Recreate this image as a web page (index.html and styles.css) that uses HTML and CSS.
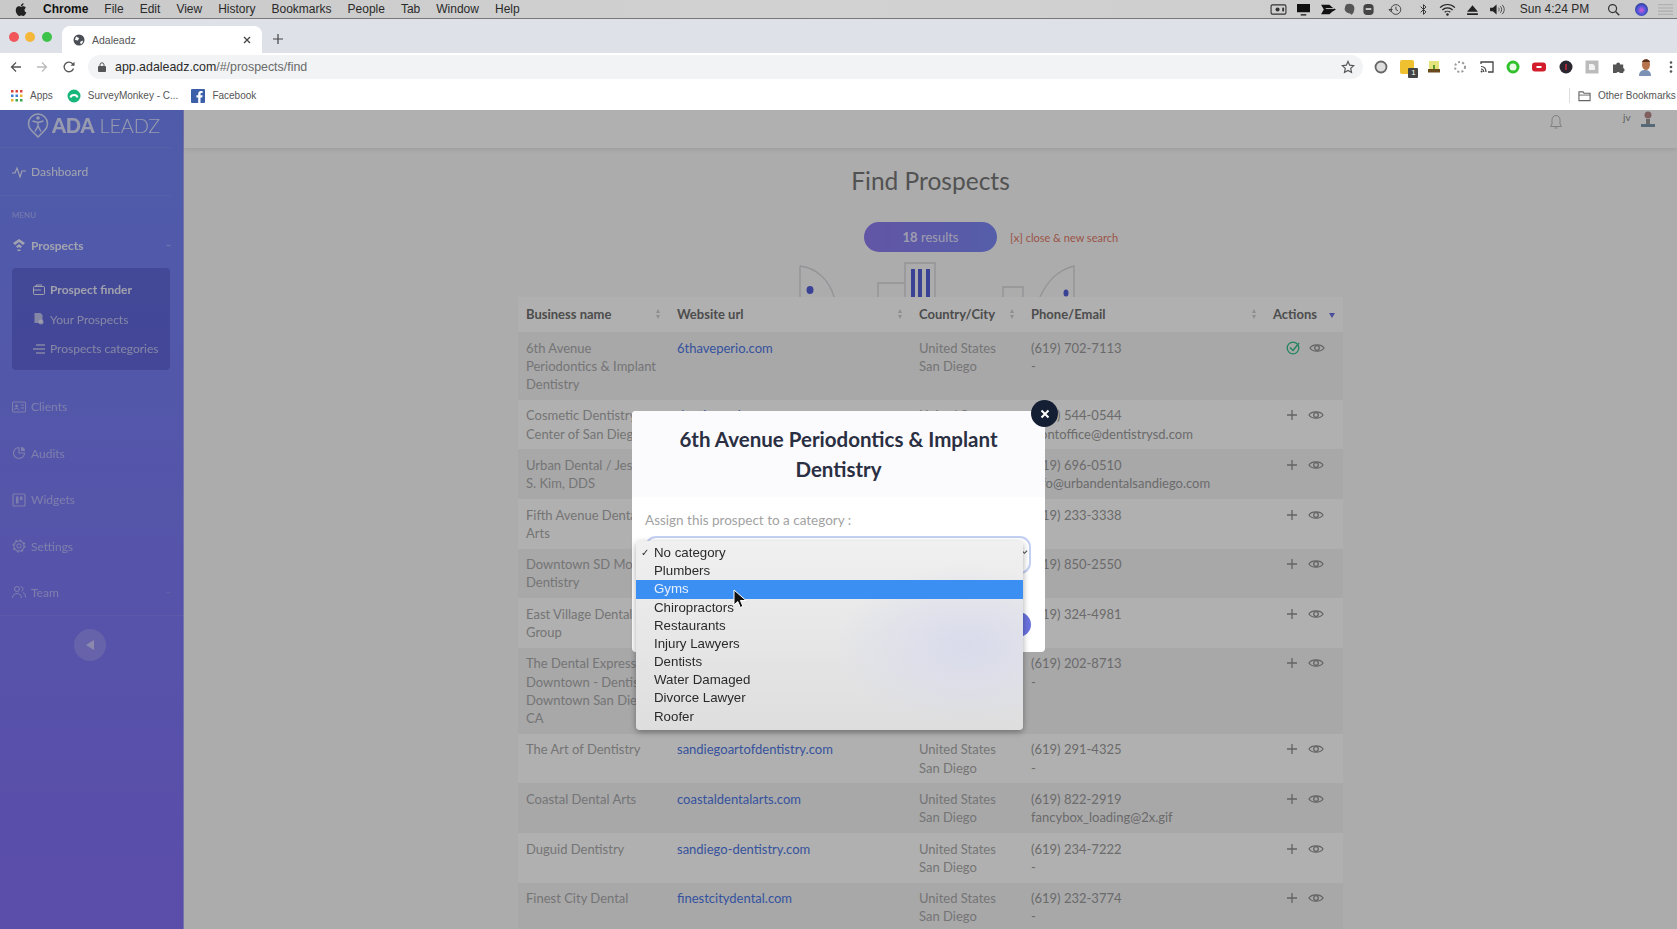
FILE: index.html
```html
<!DOCTYPE html>
<html lang="en">
<head>
<meta charset="utf-8">
<title>Adaleadz</title>
<link rel="stylesheet" href="styles.css">
</head>
<body>
<svg class="defs" aria-hidden="true">
  <symbol id="eye" viewBox="0 0 16 12"><path d="M1 6C3.500 1.800 12.500 1.800 15 6 12.500 10.200 3.500 10.200 1 6Z" fill="none" stroke="currentColor" stroke-width="1.300"/><circle cx="8" cy="6" r="2.300" fill="none" stroke="currentColor" stroke-width="1.300"/></symbol>
  <symbol id="plus" viewBox="0 0 12 12"><path d="M6 1v10M1 6h10" fill="none" stroke="currentColor" stroke-width="1.300"/></symbol>
  <symbol id="sort" viewBox="0 0 6 12"><path d="M3 1 5 5H1ZM3 11 1 7h4Z" fill="currentColor"/></symbol>
</svg>
<div class="screen">
  <div class="menubar">
    <svg class="apple" viewBox="0 0 15 16"><path d="M11.200 8.600c0-1.700 1.400-2.500 1.500-2.600-.8-1.200-2.100-1.300-2.500-1.400-1.100-.1-2.100.6-2.600.6s-1.400-.6-2.300-.6C4.100 4.600 3 5.300 2.400 6.300c-1.200 2.100-.3 5.200.9 6.900.6.800 1.300 1.800 2.200 1.700.9 0 1.200-.6 2.300-.6s1.400.6 2.300.6c1 0 1.600-.8 2.100-1.700.7-1 1-1.900 1-2-.1 0-1.900-.7-2-2.600zM9.500 3.500c.5-.6.800-1.400.7-2.300-.7 0-1.600.5-2.100 1.100-.5.500-.9 1.300-.8 2.200.8.100 1.600-.4 2.200-1z" fill="#222"/></svg>
    <nav class="menus">
      <b>Chrome</b><span>File</span><span>Edit</span><span>View</span><span>History</span><span>Bookmarks</span><span>People</span><span>Tab</span><span>Window</span><span>Help</span>
    </nav>
    <div class="tray">
      <svg viewBox="0 0 18 14"><rect x="1" y="2" width="16" height="10" rx="1.500" fill="none" stroke="#333" stroke-width="1.200"/><circle cx="8" cy="7" r="2.200" fill="#333"/><path d="M14 5v4" stroke="#333" stroke-width="2"/></svg>
      <svg viewBox="0 0 18 14"><path d="M2 1h14v9H2ZM6 12h6v1.500H6Z" fill="#111"/></svg>
      <svg viewBox="0 0 18 14"><path d="M1 2h9l3 2.500 4 2.500-4 2.500-3 2.500H1l3-5Z" fill="#111"/><path d="M6 6h9" stroke="#ccc"/></svg>
      <svg viewBox="0 0 14 14"><path d="M3 2c3-2 8-1.500 9 2 .8 3-.5 7-2.500 8.500C8.500 13 8 11 7 11 4 11 1 8 2 5Z" fill="#555"/></svg>
      <svg viewBox="0 0 14 14"><rect x="1.500" y="1" width="11" height="12" rx="4" fill="#444"/><rect x="4" y="5.500" width="6" height="2" fill="#ccc"/></svg>
      <svg viewBox="0 0 16 16"><circle cx="8.500" cy="8" r="6" fill="none" stroke="#444" stroke-width="1.200"/><path d="M8.500 4.500V8l2.500 1.500M0 8h4L2 10.500Z" fill="none" stroke="#444" stroke-width="1.200"/></svg>
      <svg viewBox="0 0 10 16"><path d="M1.500 4.500 8 11 5 14V2l3 3-6.500 6.500" fill="none" stroke="#333" stroke-width="1.200"/></svg>
      <svg viewBox="0 0 18 14"><path d="M1 5c4.500-4.500 11.500-4.500 16 0M3.500 7.500c3-3 8-3 11 0M6 10c1.600-1.500 4.400-1.500 6 0" fill="none" stroke="#222" stroke-width="1.300"/><circle cx="9" cy="12.300" r="1.300" fill="#222"/></svg>
      <svg viewBox="0 0 12 12"><path d="M6 2 11 8H1ZM1 9.500h10V11H1Z" fill="#222"/></svg>
      <svg viewBox="0 0 18 14"><path d="M1 5h3l4-3.500v11L4 9H1Z" fill="#222"/><path d="M10 5c1 1 1 3 0 4M12 3.500c2 2 2 5 0 7M14 2c3 3 3 7 0 10" fill="none" stroke="#444"/></svg>
      <span class="clock">Sun 4:24 PM</span>
      <svg viewBox="0 0 14 14"><circle cx="6" cy="6" r="4.300" fill="none" stroke="#333" stroke-width="1.300"/><path d="m9.200 9.200 4 4" stroke="#333" stroke-width="1.500"/></svg>
      <span class="siri"></span>
      <svg viewBox="0 0 16 12"><path d="M1 1.500h14M1 4.500h14M1 7.500h14M1 10.500h14" stroke="#aaa"/></svg>
    </div>
  </div>

  <div class="tabstrip">
    <div class="lights"><i class="red"></i><i class="amber"></i><i class="green"></i></div>
    <div class="tab">
      <svg class="favicon" viewBox="0 0 12 12"><circle cx="6" cy="6" r="5.500" fill="#4a4f55"/><path d="M3 2.500 6 4 5 6.500 2 6ZM7 8l2.500-1.500L10 8 8 10.500Z" fill="#fff"/></svg>
      <span class="tab-title">Adaleadz</span>
      <svg class="tab-close" viewBox="0 0 8 8"><path d="m1 1 6 6M7 1 1 7" stroke="#444" stroke-width="1.300"/></svg>
    </div>
    <svg class="new-tab" viewBox="0 0 10 10"><path d="M5 0v10M0 5h10" stroke="#444" stroke-width="1.200"/></svg>
  </div>

  <div class="toolbar">
    <svg class="nav nav-back" viewBox="0 0 12 12"><path d="M11 6H2M6 1.500 1.500 6 6 10.500" fill="none" stroke="#555" stroke-width="1.300"/></svg>
    <svg class="nav nav-fwd" viewBox="0 0 12 12"><path d="M1 6h9M6 1.500 10.500 6 6 10.500" fill="none" stroke="#bbb" stroke-width="1.300"/></svg>
    <svg class="nav nav-reload" viewBox="0 0 12 12"><path d="M10.500 7.500A4.800 4.800 0 1 1 9.500 2.700L11 4" fill="none" stroke="#555" stroke-width="1.300"/><path d="M11.500.8v4h-4Z" fill="#555"/></svg>
    <div class="omnibox">
      <svg class="lock" viewBox="0 0 8 10"><rect y="4" width="8" height="6" rx="1" fill="#555"/><path d="M2 4V2.800a2 2 0 0 1 4 0V4" fill="none" stroke="#555"/></svg>
      <span class="url">app.adaleadz.com<span class="url-path">/#/prospects/find</span></span>
      <svg class="star" viewBox="0 0 14 14"><path d="m7 1.500 1.700 3.700 4 .5-3 2.700.8 4L7 10.400l-3.500 2 .8-4-3-2.700 4-.5Z" fill="none" stroke="#555" stroke-width="1.200"/></svg>
    </div>
    <div class="extensions">
      <svg viewBox="0 0 14 14"><circle cx="7" cy="7" r="5.500" fill="#ddd" stroke="#666" stroke-width="1.800"/></svg>
      <span class="ext-yellow"><span class="ext-badge">1</span></span>
      <svg viewBox="0 0 14 14"><path d="M2 1h10v8H2Z" fill="#e4e37c"/><path d="M1 9h12v3.500H1Z" fill="#6a4a1c"/><path d="M6 5h2v4H6Z" fill="#5a9a30"/></svg>
      <svg viewBox="0 0 14 14"><circle cx="7" cy="7" r="5" fill="none" stroke="#999" stroke-width="2" stroke-dasharray="2 2.200"/></svg>
      <svg viewBox="0 0 14 14"><path d="M1 4V2h12v10H8" fill="none" stroke="#444" stroke-width="1.300"/><path d="M1 6.500c3 0 5 2 5 5.500M1 9c1.500 0 2.800 1.200 2.800 3" fill="none" stroke="#444" stroke-width="1.200"/><circle cx="1.600" cy="11.600" r="1" fill="#444"/></svg>
      <svg viewBox="0 0 14 14"><circle cx="7" cy="7" r="5" fill="#eafbe6" stroke="#31c22e" stroke-width="3"/></svg>
      <svg viewBox="0 0 14 14"><rect y="2.500" width="14" height="9" rx="3" fill="#d31c2c"/><rect x="4.500" y="6" width="5" height="2" fill="#fff"/></svg>
      <svg viewBox="0 0 14 14"><circle cx="7" cy="7" r="6.500" fill="#2c2630"/><path d="M6 4h2v6H6Z" fill="#a02a3a"/></svg>
      <svg viewBox="0 0 14 14"><rect x=".5" y=".5" width="13" height="13" fill="#bbb"/><path d="M4 4h4l2 2v4H4Z" fill="#f2f2f2"/></svg>
      <svg viewBox="0 0 14 14"><path d="M1 4.500h3.200a2 2 0 0 1 4 0h3V8a2 2 0 0 1 0 3.800V13h-3.300a2 2 0 0 0-3.500 0H1Z" fill="#555"/></svg>
      <svg viewBox="0 0 18 18"><path d="M3 18c0-5 3-6 6-6s6 1 6 6Z" fill="#7d93b5"/><ellipse cx="10" cy="6.500" rx="4" ry="5.500" fill="#b7744c"/><path d="M6 4c1-3.500 7-4 8 0Z" fill="#5a3420"/></svg>
      <svg class="ext-dots" viewBox="0 0 4 14"><circle cx="2" cy="2.500" r="1.300" fill="#555"/><circle cx="2" cy="7" r="1.300" fill="#555"/><circle cx="2" cy="11.500" r="1.300" fill="#555"/></svg>
    </div>
  </div>

  <div class="bookmarks">
    <span class="bm bm-apps">
      <svg viewBox="0 0 12 12"><g fill="#d9453a"><rect width="2.500" height="2.500"/><rect x="4.500" width="2.500" height="2.500"/><rect x="9" width="2.500" height="2.500"/></g><g fill="#3e7fd8"><rect y="4.500" width="2.500" height="2.500"/><rect x="4.500" y="4.500" width="2.500" height="2.500"/></g><g fill="#e9b52f"><rect x="9" y="4.500" width="2.500" height="2.500"/><rect y="9" width="2.500" height="2.500"/></g><g fill="#3da653"><rect x="4.500" y="9" width="2.500" height="2.500"/><rect x="9" y="9" width="2.500" height="2.500"/></g></svg>
      Apps
    </span>
    <span class="bm bm-survey">
      <svg viewBox="0 0 14 14"><circle cx="7" cy="7" r="6.500" fill="#16b67a"/><path d="M3.500 8.500C4 5 10 5 10.500 8.500" fill="none" stroke="#fff" stroke-width="2"/></svg>
      SurveyMonkey - C...
    </span>
    <span class="bm bm-fb">
      <svg viewBox="0 0 14 14"><rect width="14" height="14" rx="1" fill="#3b5fa8"/><path d="M9.500 14V8.500h1.800l.3-2.200H9.500V5c0-.7.3-1.100 1.100-1.100h1V2c-.5 0-1-.1-1.600-.1C8.300 1.900 7.200 3 7.200 4.800v1.500H5.400v2.200h1.800V14Z" fill="#fff"/></svg>
      Facebook
    </span>
    <span class="bm bm-other">
      <svg viewBox="0 0 14 12"><path d="M1 1.500h4.500l1 1.500H13v8H1Z" fill="none" stroke="#666" stroke-width="1.200"/><path d="M1 5h12" stroke="#666"/></svg>
      Other Bookmarks
    </span>
  </div>

  <div class="app">
    <aside class="sidebar">
      <div class="logo">
        <svg class="logo-mark" viewBox="0 0 22 26"><path d="M11 25 4.500 18.500A9.500 9.500 0 1 1 17.500 18.500Z" fill="none" stroke="currentColor" stroke-width="1.500"/><circle cx="11" cy="6" r="1.800" fill="currentColor"/><path d="M5.500 9 11 10.500 16.500 9M11 10.500V14l-3 5.500M11 14l3 5.500" fill="none" stroke="currentColor" stroke-width="1.500"/></svg>
        <span class="logo-text"><b>ADA</b> LEADZ</span>
      </div>
      <div class="side-item side-dash">
        <svg viewBox="0 0 14 14"><path d="M0 8h3l2-5 3 9 2-6h4" fill="none" stroke="currentColor" stroke-width="1.100"/></svg>
        <span>Dashboard</span>
      </div>
      <div class="side-label">MENU</div>
      <div class="side-item side-open">
        <svg viewBox="0 0 14 14"><path d="M7 1 1 5l2 2 4-3 4 3 2-2ZM7 6 4 8.500 5.500 10 7 9l1.500 1L10 8.500ZM5.500 11.500h3V13h-3Z" fill="currentColor"/></svg>
        <span>Prospects</span><i class="caret">‹</i>
      </div>
      <div class="subnav">
        <div class="sub-item sub-active"><svg viewBox="0 0 12 12"><rect x=".5" y="2.500" width="11" height="8" rx="1" fill="none" stroke="currentColor"/><path d="M3 2.500V1h6M.5 6H8" fill="none" stroke="currentColor"/></svg><span>Prospect finder</span></div>
        <div class="sub-item"><svg viewBox="0 0 12 12"><path d="M1.500 0h6l2 2v8h-8Z" fill="currentColor"/><circle cx="8" cy="9" r="2.500" fill="currentColor"/></svg><span>Your Prospects</span></div>
        <div class="sub-item"><svg viewBox="0 0 12 12"><path d="M3 2h9M0 6h12M3 10h9" fill="none" stroke="currentColor" stroke-width="1.300"/></svg><span>Prospects categories</span></div>
      </div>
      <div class="side-item side-dim side-first">
        <svg viewBox="0 0 14 14"><rect x=".5" y="2" width="13" height="10" rx="1" fill="none" stroke="currentColor"/><circle cx="4.500" cy="6" r="1.500" fill="currentColor"/><path d="M2 10c.5-2 4.500-2 5 0M9 5h3M9 8h3" fill="none" stroke="currentColor"/></svg>
        <span>Clients</span>
      </div>
      <div class="side-item side-dim">
        <svg viewBox="0 0 14 14"><path d="M7 1.500A5.500 5.500 0 1 0 12.500 7H7Z" fill="none" stroke="currentColor" stroke-width="1.200"/><path d="M9 1a4 4 0 0 1 4 4H9Z" fill="currentColor"/></svg>
        <span>Audits</span>
      </div>
      <div class="side-item side-dim">
        <svg viewBox="0 0 14 14"><rect x="1" y="1" width="12" height="12" rx="1" fill="none" stroke="currentColor" stroke-width="1.200"/><path d="M4 3.500h2.500v7H4ZM8 3.500h2.500v3.500H8Z" fill="currentColor"/></svg>
        <span>Widgets</span>
      </div>
      <div class="side-item side-dim">
        <svg viewBox="0 0 14 14"><circle cx="7" cy="7" r="2.200" fill="none" stroke="currentColor"/><circle cx="7" cy="7" r="5" fill="none" stroke="currentColor" stroke-width="1.100"/><circle cx="7" cy="7" r="6" fill="none" stroke="currentColor" stroke-width="1.200" stroke-dasharray="2 2.700"/></svg>
        <span>Settings</span>
      </div>
      <div class="side-item side-dim side-last">
        <svg viewBox="0 0 14 14"><circle cx="5" cy="4" r="2.500" fill="none" stroke="currentColor"/><path d="M.5 13c0-6 9-6 9 0M8.500 1.800c2.500-.5 3.500 3.500 1 4.500M11 7.500c1.500.5 2.500 2.500 2.500 5" fill="none" stroke="currentColor"/></svg>
        <span>Team</span><i class="caret">‹</i>
      </div>
      <div class="collapse"><svg viewBox="0 0 8 10"><path d="M8 0v10L0 5Z" fill="currentColor"/></svg></div>
    </aside>

    <main class="main">
      <header class="topbar">
        <svg class="bell" viewBox="0 0 14 16"><path d="M7 1.500c-3 0-4 2.500-4 5V10l-1.500 2.500h11L11 10V6.500c0-2.500-1-5-4-5ZM5.500 14h3" fill="none" stroke="currentColor"/></svg>
        <span class="user-initials">jv</span>
        <svg class="user-pic" viewBox="0 0 16 18"><circle cx="8" cy="5" r="3.500" fill="#b98a8a"/><path d="M1 14h14v3H1Z" fill="#7f97ad"/><path d="M6 9h4v5H6Z" fill="#999"/></svg>
      </header>
      <section class="content">
        <h1 class="page-title">Find Prospects</h1>
        <div class="results">
          <span></span>
          <span class="pill"><b>18</b> results</span>
          <span class="close-search"><span class="bracket">[x]</span> close &amp; new search</span>
        </div>
        <svg class="art" viewBox="0 0 825 35">
          <g fill="none" stroke="#d5d5d8" stroke-width="1.300">
            <path d="M282 4C300 6 312 20 316 35M282 4V35"/>
            <path d="M360 35V21H387M387 35V1H417V35"/>
            <path d="M485 35V25H505V35"/>
            <path d="M522 35C530 18 540 8 556 4V35"/>
          </g>
          <g fill="#5560d8">
            <ellipse cx="292" cy="28" rx="3.500" ry="4"/>
            <rect x="393" y="7" width="4" height="28"/><rect x="400" y="7" width="4" height="28"/><rect x="408" y="7" width="4" height="28"/>
            <ellipse cx="548" cy="31" rx="2.500" ry="3.500"/>
          </g>
        </svg>
        <table class="grid">
          <colgroup><col class="c1"><col class="c2"><col class="c3"><col class="c4"><col class="c5"></colgroup>
          <thead>
            <tr>
              <th><div class="th-in">Business name<svg class="sort"><use href="#sort"/></svg></div></th>
              <th><div class="th-in">Website url<svg class="sort"><use href="#sort"/></svg></div></th>
              <th><div class="th-in">Country/City<svg class="sort"><use href="#sort"/></svg></div></th>
              <th><div class="th-in">Phone/Email<svg class="sort"><use href="#sort"/></svg></div></th>
              <th><div class="th-in">Actions<i class="th-arrow"></i></div></th>
            </tr>
          </thead>
          <tbody>
            <tr><td>6th Avenue<br>Periodontics &amp; Implant<br>Dentistry</td><td><a>6thaveperio.com</a></td><td>United States<br>San Diego</td><td class="ph">(619) 702-7113<br>-</td><td><div class="acts"><svg class="ic-check" viewBox="0 0 14 14"><circle cx="7" cy="7" r="5.800" fill="none" stroke="currentColor" stroke-width="1.300"/><path d="m4 6.500 3 3L13 2" fill="none" stroke="currentColor" stroke-width="1.500"/></svg><svg class="ic-eye"><use href="#eye"/></svg></div></td></tr>
            <tr><td>Cosmetic Dentistry<br>Center of San Diego</td><td><a>dentistrysd.com</a></td><td>United States<br>San Diego</td><td class="ph">(619) 544-0544<br>frontoffice@dentistrysd.com</td><td><div class="acts"><svg class="ic-plus"><use href="#plus"/></svg><svg class="ic-eye"><use href="#eye"/></svg></div></td></tr>
            <tr><td>Urban Dental / Jessica<br>S. Kim, DDS</td><td><a>urbandentalsandiego.com</a></td><td>United States<br>San Diego</td><td class="ph">(619) 696-0510<br>info@urbandentalsandiego.com</td><td><div class="acts"><svg class="ic-plus"><use href="#plus"/></svg><svg class="ic-eye"><use href="#eye"/></svg></div></td></tr>
            <tr><td>Fifth Avenue Dental<br>Arts</td><td><a>fifthavedental.com</a></td><td>United States<br>San Diego</td><td class="ph">(619) 233-3338<br>-</td><td><div class="acts"><svg class="ic-plus"><use href="#plus"/></svg><svg class="ic-eye"><use href="#eye"/></svg></div></td></tr>
            <tr><td>Downtown SD Modern<br>Dentistry</td><td><a>downtownsd.com</a></td><td>United States<br>San Diego</td><td class="ph">(619) 850-2550<br>-</td><td><div class="acts"><svg class="ic-plus"><use href="#plus"/></svg><svg class="ic-eye"><use href="#eye"/></svg></div></td></tr>
            <tr><td>East Village Dental<br>Group</td><td><a>eastvillagedental.com</a></td><td>United States<br>San Diego</td><td class="ph">(619) 324-4981<br>-</td><td><div class="acts"><svg class="ic-plus"><use href="#plus"/></svg><svg class="ic-eye"><use href="#eye"/></svg></div></td></tr>
            <tr><td>The Dental Express<br>Downtown - Dentist<br>Downtown San Diego,<br>CA</td><td><a>thedentalexpress.com</a></td><td>United States<br>San Diego</td><td class="ph">(619) 202-8713<br>-</td><td><div class="acts"><svg class="ic-plus"><use href="#plus"/></svg><svg class="ic-eye"><use href="#eye"/></svg></div></td></tr>
            <tr><td>The Art of Dentistry</td><td><a>sandiegoartofdentistry.com</a></td><td>United States<br>San Diego</td><td class="ph">(619) 291-4325<br>-</td><td><div class="acts"><svg class="ic-plus"><use href="#plus"/></svg><svg class="ic-eye"><use href="#eye"/></svg></div></td></tr>
            <tr><td>Coastal Dental Arts</td><td><a>coastaldentalarts.com</a></td><td>United States<br>San Diego</td><td class="ph">(619) 822-2919<br>fancybox_loading@2x.gif</td><td><div class="acts"><svg class="ic-plus"><use href="#plus"/></svg><svg class="ic-eye"><use href="#eye"/></svg></div></td></tr>
            <tr><td>Duguid Dentistry</td><td><a>sandiego-dentistry.com</a></td><td>United States<br>San Diego</td><td class="ph">(619) 234-7222<br>-</td><td><div class="acts"><svg class="ic-plus"><use href="#plus"/></svg><svg class="ic-eye"><use href="#eye"/></svg></div></td></tr>
            <tr><td>Finest City Dental</td><td><a>finestcitydental.com</a></td><td>United States<br>San Diego</td><td class="ph">(619) 232-3774<br>-</td><td><div class="acts"><svg class="ic-plus"><use href="#plus"/></svg><svg class="ic-eye"><use href="#eye"/></svg></div></td></tr>
          </tbody>
        </table>
      </section>
    </main>

    <div class="backdrop"></div>

    <div class="modal">
      <span class="modal-close"><svg viewBox="0 0 10 10"><path d="m1.500 1.500 7 7M8.500 1.500l-7 7" stroke="#fff" stroke-width="2"/></svg></span>
      <div class="modal-head">6th Avenue Periodontics &amp; Implant Dentistry</div>
      <div class="modal-body">
        <div class="modal-label">Assign this prospect to a category :</div>
        <div class="select">No category<svg class="chev" viewBox="0 0 8 6"><path d="m1 1.500 3 3 3-3" fill="none" stroke="#555" stroke-width="1.300"/></svg></div>
        <div class="modal-actions"><span class="modal-btn">Save</span></div>
      </div>
    </div>

    <ul class="popup">
      <li class="opt-checked">No category</li>
      <li>Plumbers</li>
      <li class="opt-active">Gyms</li>
      <li>Chiropractors</li>
      <li>Restaurants</li>
      <li>Injury Lawyers</li>
      <li>Dentists</li>
      <li>Water Damaged</li>
      <li>Divorce Lawyer</li>
      <li>Roofer</li>
    </ul>

    <svg class="cursor" viewBox="0 0 14 20"><path d="M1 1v15l3.800-3.500 2.500 6 2.600-1.200-2.500-5.800H13Z" fill="#111" stroke="#fff" stroke-width="1"/></svg>
  </div>
</div>
</body>
</html>
```

FILE: styles.css
```css
* { box-sizing: border-box; }
html, body { margin: 0; height: 100%; }
body { overflow: hidden; background: #fff; font-family: "Liberation Sans", Arial, sans-serif; color: #333; }
.defs { display: none; }
.screen { width: 1677px; height: 929px; overflow: hidden; display: flex; flex-direction: column; filter: blur(.45px); }

/* mac menu bar */
.menubar { height: 19px; flex: none; display: flex; align-items: center; padding-left: 14px; background: linear-gradient(90deg, #c9c9c9, #d2d2d2 50%, #cbcbcb); border-bottom: 1px solid #77787a; font-size: 12px; color: #2a2a2a; }
.apple { width: 14px; height: 15px; margin-right: 15px; flex: none; }
.menus { display: flex; gap: 16px; }
.menus b { font-weight: 700; color: #111; }
.tray { margin-left: auto; padding-right: 2.500px; display: grid; grid-template-columns: 25px 25px 25px 17px 21px 33px 23px 25px 25px 25px 90px 27px 29px 19px; justify-items: center; align-items: center; height: 18px; }
.tray svg { width: 100%; max-width: 17px; height: 13px; }
.clock { white-space: nowrap; }
.siri { width: 13px; height: 13px; border-radius: 50%; background: radial-gradient(circle at 50% 55%, #d65ad8 0, #4a56d8 45%, #17204f 100%); }

/* tab strip */
.tabstrip { height: 34px; flex: none; display: flex; align-items: flex-end; background: #dee1e8; }
.lights { display: flex; gap: 6.500px; padding: 0 0 11px 8.500px; width: 62px; }
.lights i { width: 10px; height: 10px; border-radius: 50%; }
.red { background: #f0565a; }
.amber { background: #f5b73a; }
.green { background: #3dc24a; }
.tab { width: 200px; height: 27px; background: #fff; border-radius: 8px 8px 0 0; display: flex; align-items: center; padding: 0 11px 0 11px; }
.favicon { width: 12px; height: 12px; flex: none; }
.tab-title { margin-left: 7px; font-size: 10.500px; color: #555; }
.tab-close { width: 8px; height: 8px; margin-left: auto; }
.new-tab { width: 10px; height: 10px; margin: 0 0 9px 11px; }

/* toolbar */
.toolbar { height: 28px; flex: none; display: flex; align-items: center; background: #fff; padding-left: 10px; }
.nav { width: 12px; height: 12px; flex: none; }
.nav-fwd { margin-left: 14px; }
.nav-reload { margin-left: 15px; }
.omnibox { margin-left: 13px; width: 1275px; height: 24px; border-radius: 12px; background: #f1f3f4; display: flex; align-items: center; padding-left: 10px; flex: none; }
.lock { width: 8px; height: 10px; flex: none; }
.url { margin-left: 9px; font-size: 12.400px; color: #2a2a2a; }
.url-path { color: #6a6a6a; }
.star { width: 14px; height: 14px; margin-left: auto; margin-right: 8px; }
.extensions { margin-left: 4.800px; display: grid; grid-template-columns: repeat(11, 26.400px) 18px; justify-items: center; align-items: center; }
.extensions svg { width: 14px; height: 14px; }
.extensions svg:nth-child(11) { width: 18px; height: 18px; }
.extensions .ext-dots { width: 4px; justify-self: end; margin-right: 3px; }
.ext-yellow { width: 14px; height: 14px; background: #efc02f; border-radius: 2px; position: relative; }
.ext-badge { position: absolute; right: -4px; bottom: -4px; width: 10px; height: 10px; background: #444; color: #fff; font-size: 8px; line-height: 10px; text-align: center; border-radius: 1px; }

/* bookmarks */
.bookmarks { height: 29px; flex: none; display: flex; align-items: center; background: #fff; font-size: 10px; color: #555; padding-left: 11px; white-space: nowrap; }
.bm { display: flex; align-items: center; gap: 7px; }
.bm svg { width: 12px; height: 12px; flex: none; }
.bm-survey { margin-left: 14px; }
.bm-survey svg, .bm-fb svg { width: 14px; height: 14px; }
.bm-fb { margin-left: 13px; }
.bm-other { margin-left: auto; width: 108px; flex: none; border-left: 1px solid #ddd; height: 15px; padding-left: 8px; overflow: hidden; }
.bm-other svg { width: 13px; }

/* app */
.app { position: relative; flex: 1; display: flex; overflow: hidden; font-family: Lato, "Open Sans", sans-serif; }
.sidebar { width: 184px; flex: none; background: linear-gradient(180deg, #7386f6, #8470f6); color: #fff; font-size: 12px; border-right: 1px solid #a8a8f8; }
.logo { height: 38px; display: flex; align-items: center; padding: 0 0 8px 27px; gap: 3px; border-bottom: 1px solid rgba(255,255,255,.08); color: rgba(255,255,255,.75); margin: 0 12px 0 0; }
.logo-mark { width: 22px; height: 26px; flex: none; }
.logo-text { font-size: 20px; font-weight: 300; white-space: nowrap; letter-spacing: -.2px; }
.logo-text b { font-weight: 900; }
.side-item { display: flex; align-items: center; height: 46.400px; padding: 0 14px 0 12px; gap: 5px; }
.side-item svg { width: 14px; height: 14px; flex: none; }
.side-dash { height: 48px; margin-right: 12px; padding-right: 0; border-bottom: 1px solid rgba(255,255,255,.08); color: rgba(255,255,255,.85); }
.side-label { padding: 13px 0 7px 12px; font-size: 8px; line-height: 12px; color: rgba(255,255,255,.4); }
.side-open { height: 34px; font-weight: 700; color: rgba(255,255,255,.85); }
.caret { margin-left: auto; font-style: normal; font-size: 9px; opacity: .5; transform: rotate(-90deg); }
.subnav { margin: 6px 13px 0 12px; height: 102px; padding: 7px 0 0; background: rgba(60,60,170,.35); border-radius: 4px; }
.sub-item { height: 29.500px; display: flex; align-items: center; padding-left: 21px; gap: 5px; color: rgba(255,255,255,.6); }
.sub-item svg { width: 12px; height: 12px; flex: none; }
.sub-active { font-weight: 700; color: rgba(255,255,255,.85); }
.side-dim { color: rgba(255,255,255,.45); }
.side-first { margin-top: 13.800px; }
.side-last { border-bottom: 1px solid rgba(255,255,255,.08); }
.collapse { width: 32px; height: 32px; margin: 13px 0 0 74px; border-radius: 50%; background: rgba(255,255,255,.18); color: rgba(255,255,255,.5); display: flex; align-items: center; justify-content: center; }
.collapse svg { width: 8px; height: 10px; }

.main { flex: 1; background: #f9f9fb; min-width: 0; }
.topbar { height: 38px; background: #fff; box-shadow: 0 2px 4px rgba(0,0,0,.08); display: flex; align-items: flex-start; color: #bbb; }
.bell { width: 14px; height: 16px; margin: 4px 0 0 1365px; flex: none; }
.user-initials { margin: 1px 0 0 57px; width: 12px; font-size: 10px; color: #888; padding-left: 3px; border-left: 0; }
.user-pic { width: 16px; height: 18px; margin: 0 0 0 8px; flex: none; }
.content { display: flex; flex-direction: column; align-items: center; }
.page-title { margin: 18px 0 0; font-size: 24.500px; line-height: 30px; font-weight: 400; color: #777; }
.results { margin-top: 26px; width: 100%; display: grid; grid-template-columns: 1fr 133px 1fr; align-items: center; }
.pill { height: 30px; border-radius: 15px; background: linear-gradient(90deg, #8d7df0, #7c88f6); color: rgba(255,255,255,.8); font-size: 13px; line-height: 30px; text-align: center; }
.pill b { font-weight: 700; }
.close-search { margin-left: 13px; font-size: 11px; color: #e27a66; }
.bracket { font-size: 12px; }
.art { display: block; margin-top: 10px; width: 825px; height: 35px; flex: none; }

.grid { width: 825px; table-layout: fixed; border-collapse: collapse; font-size: 13px; line-height: 18.200px; color: #aaa; }
.c1 { width: 151px; }
.c2 { width: 242px; }
.c3 { width: 112px; }
.c4 { width: 242px; }
.c5 { width: 78px; }
.grid th { height: 35px; padding: 0 8px; background: #fff; text-align: left; font-weight: 700; color: #707070; vertical-align: middle; }
.th-in { display: flex; justify-content: space-between; align-items: center; white-space: nowrap; }
.sort { width: 6px; height: 12px; color: #d0d0d0; flex: none; }
.th-arrow { width: 0; height: 0; border: 3.500px solid transparent; border-top: 5px solid #6a70e0; margin: 6px 0 0; }
.grid td { padding: 6.600px 8px; vertical-align: top; white-space: nowrap; overflow: hidden; }
.grid tbody tr:nth-child(odd) td { background: #f3f3f5; }
.grid tbody tr:nth-child(even) td { background: #fff; }
.grid a { color: #4f78e4; }
.ph { color: #9b9b9b; }
.acts { display: flex; align-items: center; height: 18.200px; padding-left: 13px; gap: 10px; color: #909090; }
.ic-plus { width: 12px; height: 12px; flex: none; }
.ic-eye { width: 16px; height: 12px; flex: none; }
.ic-check { width: 14px; height: 14px; flex: none; color: #33c08a; margin-right: -1px; }

/* overlay */
.backdrop { position: absolute; inset: 0; background: rgba(0,0,0,.31); }
.modal { position: absolute; left: 632px; top: 301px; width: 413px; height: 241px; background: #fff; border-radius: 4px; }
.modal-close { position: absolute; right: -13px; top: -11px; width: 27px; height: 27px; border-radius: 50%; background: #151f33; display: flex; align-items: center; justify-content: center; }
.modal-close svg { width: 10px; height: 10px; }
.modal-head { height: 86px; padding: 13px 24px; background: #fbfbfe; text-align: center; font-size: 20.500px; line-height: 30px; font-weight: 700; color: #2a2f42; border-radius: 4px 4px 0 0; }
.modal-body { padding: 14px 14px 0 13px; }
.modal-label { font-size: 13.500px; line-height: 18px; color: #a2a2a2; }
.select { margin-top: 7px; height: 38px; border: 2px solid #c4d0f2; border-radius: 11px; padding: 0 12px; font-size: 13px; line-height: 34px; color: #555; position: relative; }
.chev { position: absolute; right: 1px; top: 11px; width: 7px; height: 6px; }
.modal-actions { margin-top: 38px; display: flex; justify-content: flex-end; }
.modal-btn { width: 100px; height: 25px; border-radius: 13px; background: #6a72de; color: #fff; font-size: 12px; line-height: 25px; text-align: center; }

.popup { position: absolute; left: 636px; top: 431px; width: 387px; height: 189px; margin: 0; padding: 3px 0 0; list-style: none; border-radius: 4px; background: radial-gradient(ellipse 130px 80px at 330px 105px, #d9dbec 0, rgba(217,219,236,0) 100%), linear-gradient(180deg, #f0f0f0, #e3e3e4 70%, #dedede); box-shadow: 0 2px 6px rgba(0,0,0,.35); font-family: "Liberation Sans", Arial, sans-serif; font-size: 13.300px; line-height: 18.170px; color: #2a2a2a; }
.popup li { padding-left: 18px; position: relative; }
.opt-checked::before { content: "✓"; position: absolute; left: 5px; font-size: 10px; font-family: "DejaVu Sans", sans-serif; }
.opt-active { background: #3b8ff2; color: #e6f0fc; }
.cursor { position: absolute; left: 733px; top: 479px; width: 14px; height: 20px; }
```
